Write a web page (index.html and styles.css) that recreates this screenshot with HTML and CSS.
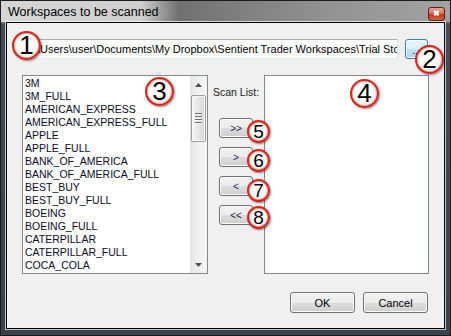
FILE: index.html
```html
<!DOCTYPE html>
<html lang="en">
<head>
  <meta charset="UTF-8">
  <title>Workspaces to be scanned</title>
  <link rel="stylesheet" href="styles.css">
</head>
<body>
  <div class="window">
    <div class="titlebar">
      <span class="title">Workspaces to be scanned</span>
      <button class="close-button">&#x2716;</button>
    </div>

    <div class="client">
      <div class="path-row">
        <div class="path-box">C:\Users\user\Documents\My Dropbox\Sentient Trader Workspaces\Trial Stocks</div>
        <button class="browse-button">...</button>
      </div>

      <div class="lists">
        <div class="list-box">
          <div class="items">
            <div>3M</div>
            <div>3M_FULL</div>
            <div>AMERICAN_EXPRESS</div>
            <div>AMERICAN_EXPRESS_FULL</div>
            <div>APPLE</div>
            <div>APPLE_FULL</div>
            <div>BANK_OF_AMERICA</div>
            <div>BANK_OF_AMERICA_FULL</div>
            <div>BEST_BUY</div>
            <div>BEST_BUY_FULL</div>
            <div>BOEING</div>
            <div>BOEING_FULL</div>
            <div>CATERPILLAR</div>
            <div>CATERPILLAR_FULL</div>
            <div>COCA_COLA</div>
          </div>
          <div class="scrollbar">
            <div class="arrow">
              <svg width="7" height="4" viewBox="0 0 7 4"><polygon points="0,4 7,4 3.5,0" fill="#4d4d4d"/></svg>
            </div>
            <div class="track">
              <div class="thumb"><span></span><span></span><span></span><span></span></div>
            </div>
            <div class="arrow">
              <svg width="7" height="4" viewBox="0 0 7 4"><polygon points="0,0 7,0 3.5,4" fill="#4d4d4d"/></svg>
            </div>
          </div>
        </div>

        <div class="middle">
          <div class="scan-label">Scan List:</div>
          <button class="move-button">&gt;&gt;</button>
          <button class="move-button">&gt;</button>
          <button class="move-button">&lt;</button>
          <button class="move-button">&lt;&lt;</button>
        </div>

        <div class="scan-box"></div>
      </div>

      <div class="footer">
        <button class="dialog-button">OK</button>
        <button class="dialog-button">Cancel</button>
      </div>
    </div>

    <!-- numbered callouts -->
    <div class="badge big b1">1</div>
    <div class="badge big b2">2</div>
    <div class="badge big b3">3</div>
    <div class="badge big b4">4</div>
    <div class="badge small b5">5</div>
    <div class="badge small b6">6</div>
    <div class="badge small b7">7</div>
    <div class="badge small b8">8</div>
  </div>
</body>
</html>
```

FILE: styles.css
```css
body {
  margin: 0;
  padding: 0;
  background: #fff;
  font-family: "Liberation Sans", Arial, sans-serif;
}
.window {
  position: relative;
  width: 451px;
  height: 336px;
  box-sizing: border-box;
  border: 1px solid #1c1c1c;
  padding: 0 5px 6px 5px;
  background: linear-gradient(to bottom, #b4b4b4 0, #9a9a9a 18px, #434d57 24px, #3a434d 100%);
  display: flex;
  flex-direction: column;
}
.titlebar {
  height: 21px;
  margin: 0 -5px;
  padding: 0 5px 0 7px;
  display: flex;
  align-items: center;
  justify-content: space-between;
  background: linear-gradient(90deg, #d6d6d6 0, #cfcfcf 140px, #707070 178px, #7c7c7c 225px, #939393 330px, #a2a2a2 100%);
}
.title {
  font-size: 12.5px;
  color: #000;
  padding-top: 1px;
}
.close-button {
  width: 17px;
  height: 14px;
  margin-top: 5px;
  padding: 0;
  border: 1px solid #5a1f14;
  border-radius: 3px;
  background: linear-gradient(to bottom, #e9a595 0, #d9725c 45%, #c0391f 55%, #d0604a 100%);
  color: #fff;
  font-size: 8px;
  line-height: 12px;
  font-weight: bold;
}
.client {
  height: 307px;
  box-sizing: border-box;
  background: #f0f0f0;
  border: 1px solid #000;
  box-shadow: 0 0 0 1px rgba(255, 255, 255, 0.7);
  padding: 16px 16px 0 15px;
  display: flex;
  flex-direction: column;
  font-size: 10.5px;
  color: #000;
}
.path-row {
  display: flex;
  gap: 7px;
  height: 20px;
}
.path-box {
  flex: 1;
  box-sizing: border-box;
  height: 20px;
  background: #fff;
  border: 1px solid #abadb3;
  border-color: #abadb3 #dbdfe6 #e3e9ef #e2e3ea;
  padding-left: 3px;
  font-size: 11px;
  line-height: 18px;
  white-space: nowrap;
  overflow: hidden;
}
.browse-button {
  width: 23px;
  height: 20px;
  padding: 0;
  border: 1px solid #3c7fb1;
  border-radius: 3px;
  background: linear-gradient(to bottom, #eaf6fd 0, #d9f0fc 50%, #bee6fd 50%, #a7d9f5 100%);
  box-shadow: inset 0 0 0 1px #f4fbff;
  font-family: "Liberation Sans", Arial, sans-serif;
  font-size: 10px;
  line-height: 22px;
}
.lists {
  display: grid;
  grid-template-columns: 186px 56px 165px;
  margin-top: 16px;
  height: 199px;
}
.list-box {
  display: flex;
  box-sizing: border-box;
  height: 199px;
  background: #fff;
  border: 1px solid #828790;
}
.items {
  flex: 1;
  padding: 1px 0 0 2px;
  line-height: 13px;
  white-space: nowrap;
  overflow: hidden;
  color: #0a0a1e;
}
.scrollbar {
  width: 17px;
  display: flex;
  flex-direction: column;
  background: linear-gradient(90deg, #e3e3e3 0, #eeeeee 35%, #f6f6f6 100%);
}
.arrow {
  height: 17px;
  display: flex;
  align-items: center;
  justify-content: center;
}
.track {
  flex: 1;
  padding-top: 2px;
}
.thumb {
  width: 15px;
  height: 47px;
  margin-left: 1px;
  box-sizing: border-box;
  border: 1px solid #9c9c9c;
  border-radius: 2px;
  background: linear-gradient(90deg, #f4f4f4 0, #e6e6e6 50%, #d6d6d6 100%);
  box-shadow: inset 0 0 0 1px #fafafa;
  display: flex;
  flex-direction: column;
  align-items: center;
  justify-content: center;
  gap: 1px;
}
.thumb span {
  display: block;
  width: 7px;
  height: 1px;
  background: #6e6e6e;
  border-bottom: 1px solid #f6f6f6;
}
.middle {
  display: flex;
  flex-direction: column;
  align-items: flex-start;
}
.scan-label {
  margin: 11px 0 0 5px;
  line-height: 13px;
  color: #1e1e1e;
}
.move-button {
  width: 34px;
  height: 20px;
  margin: 9px 0 0 11px;
  padding: 0;
  border: 1px solid #707070;
  border-radius: 3px;
  background: linear-gradient(to bottom, #f2f2f2 0, #ebebeb 50%, #dddddd 50%, #cfcfcf 100%);
  box-shadow: inset 0 0 0 1px #fcfcfc;
  font-family: "Liberation Sans", Arial, sans-serif;
  font-size: 10px;
  color: #1e1e50;
}
.scan-label + .move-button {
  margin-top: 19px;
}
.scan-box {
  box-sizing: border-box;
  height: 199px;
  background: #fff;
  border: 1px solid #828790;
}
.footer {
  display: flex;
  justify-content: flex-end;
  gap: 8px;
  margin-top: 18px;
}
.dialog-button {
  width: 65px;
  height: 21px;
  padding: 0;
  border: 1px solid #707070;
  border-radius: 3px;
  background: linear-gradient(to bottom, #f2f2f2 0, #ebebeb 50%, #dddddd 50%, #cfcfcf 100%);
  box-shadow: inset 0 0 0 1px #fcfcfc;
  font-family: "Liberation Sans", Arial, sans-serif;
  font-size: 11px;
  color: #000;
}
.badge {
  position: absolute;
  box-sizing: border-box;
  border-radius: 50%;
  border: 2px solid #d8241a;
  background: radial-gradient(circle at 40% 35%, #ffffff 45%, #e4e4e4 85%, #cfcfcf 100%);
  box-shadow: 1px 1px 2px rgba(0, 0, 0, 0.45), inset 0 0 0 1px #f0b0a8;
  display: flex;
  align-items: center;
  justify-content: center;
  font-family: "Liberation Sans", Arial, sans-serif;
  color: #000;
}
.big {
  width: 29px;
  height: 29px;
  font-size: 26px;
}
.small {
  width: 23px;
  height: 23px;
  font-size: 19px;
}
.b1 { left: 11px; top: 30px; }
.b2 { left: 414px; top: 44px; }
.b3 { left: 144px; top: 76px; }
.b4 { left: 349px; top: 78px; }
.b5 { left: 246px; top: 119px; }
.b6 { left: 246px; top: 148px; }
.b7 { left: 246px; top: 178px; }
.b8 { left: 246px; top: 205px; }
```
